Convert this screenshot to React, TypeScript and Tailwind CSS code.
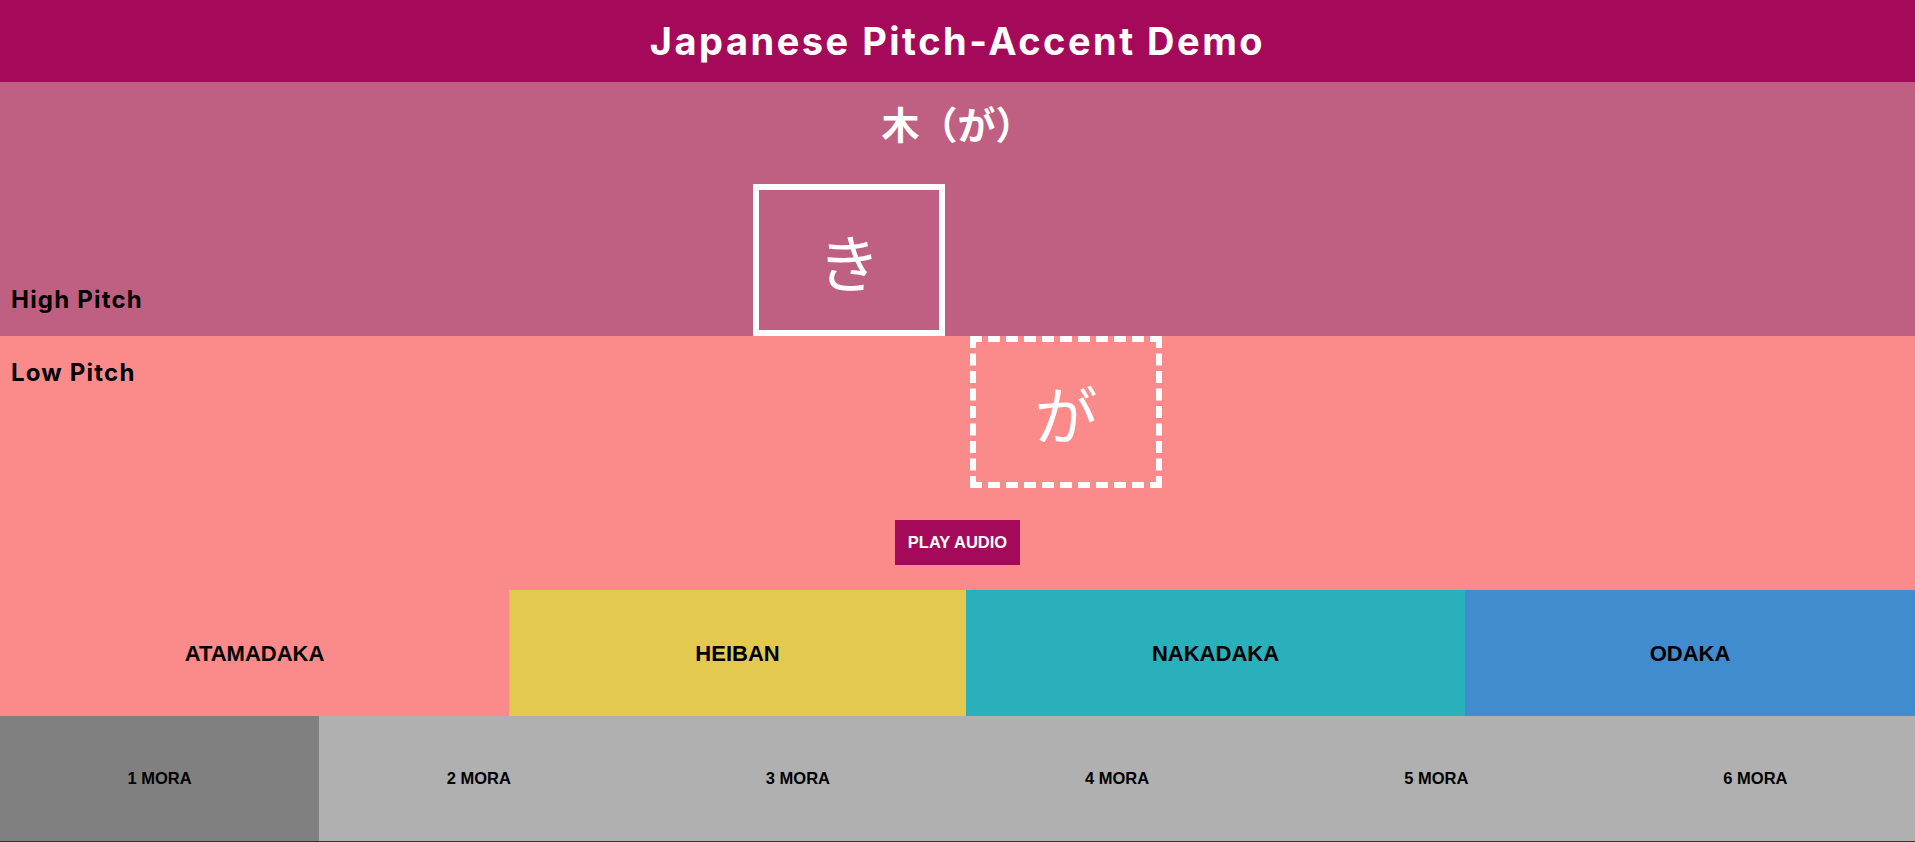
const accents = [
    { name: "ATAMADAKA", bg: "bg-[#fb8b8b]" },
    { name: "HEIBAN", bg: "bg-[#e4c950]" },
    { name: "NAKADAKA", bg: "bg-[#2ab0ba]" },
    { name: "ODAKA", bg: "bg-[#418bcf]" },
];

const moras = [1, 2, 3, 4, 5, 6];

const headFont = "font-['Inter','Noto_Sans_CJK_JP',sans-serif]";
const kanaFont = "font-['Noto_Sans_CJK_JP',sans-serif]";
const plainFont = "font-['Liberation_Sans',Arial,sans-serif]";

const MoraBox = ({ kana, dashed }: { kana: string; dashed?: boolean }) => {
    return (
        <div
            className={`w-[192px] h-[152px] border-[6px] border-white flex items-center justify-center text-white text-[63px] ${kanaFont} ${dashed ? "border-dashed" : "border-solid"}`}
        >
            {kana}
        </div>
    );
};

const Slot = () => <div className="w-[192px] h-[152px]" />;

const App = () => {
    return (
        <div className="w-full min-h-[842px] flex flex-col">
            <header className="h-[82px] bg-[#a50a5a] flex items-center justify-center">
                <h1 className={`${headFont} text-white text-[38px] font-bold tracking-[2.5px]`}>
                    Japanese Pitch-Accent Demo
                </h1>
            </header>

            <section className="bg-[#bf6082] flex flex-col">
                <h2 className={`${kanaFont} text-white text-[38px] font-bold text-center leading-[48px] pt-[17px] pb-[37px]`}>
                    木（が）
                </h2>
                <div className="grid grid-cols-[1fr_auto_1fr]">
                    <p className={`${headFont} self-end pl-[11px] pb-[18px] text-[24px] leading-[36px] font-bold tracking-[1.2px] text-black`}>
                        High Pitch
                    </p>
                    <div className="flex gap-[25px]">
                        <MoraBox kana="き" />
                        <Slot />
                    </div>
                    <div />
                </div>
            </section>

            <section className="bg-[#fb8b8b] flex flex-col">
                <div className="grid grid-cols-[1fr_auto_1fr]">
                    <p className={`${headFont} self-start pl-[11px] pt-[19px] text-[24px] leading-[36px] font-bold tracking-[1.2px] text-black`}>
                        Low Pitch
                    </p>
                    <div className="flex gap-[25px] h-[151px]">
                        <Slot />
                        <MoraBox kana="が" dashed />
                    </div>
                    <div />
                </div>
                <div className="flex justify-center pt-[33px] pb-[25px]">
                    <button className={`${plainFont} h-[45px] w-[125px] bg-[#a50a5a] text-white text-[16.5px] font-bold`}>
                        PLAY AUDIO
                    </button>
                </div>
            </section>

            <div className="grid grid-cols-[509px_457px_499px_1fr] h-[126px]">
                {accents.map((a) => (
                    <div key={a.name} className={`${a.bg} flex items-center justify-center`}>
                        <span className={`${plainFont} text-[22px] font-bold text-black`}>{a.name}</span>
                    </div>
                ))}
            </div>

            <div className="grid grid-cols-6 h-[127px] border-b-2 border-[#333]">
                {moras.map((m) => (
                    <div
                        key={m}
                        className={`${m === 1 ? "bg-[#808080]" : "bg-[#b0b0b0]"} flex items-center justify-center`}
                    >
                        <span className={`${plainFont} text-[16.5px] font-bold text-black`}>{m} MORA</span>
                    </div>
                ))}
            </div>
        </div>
    );
};

export default App;
